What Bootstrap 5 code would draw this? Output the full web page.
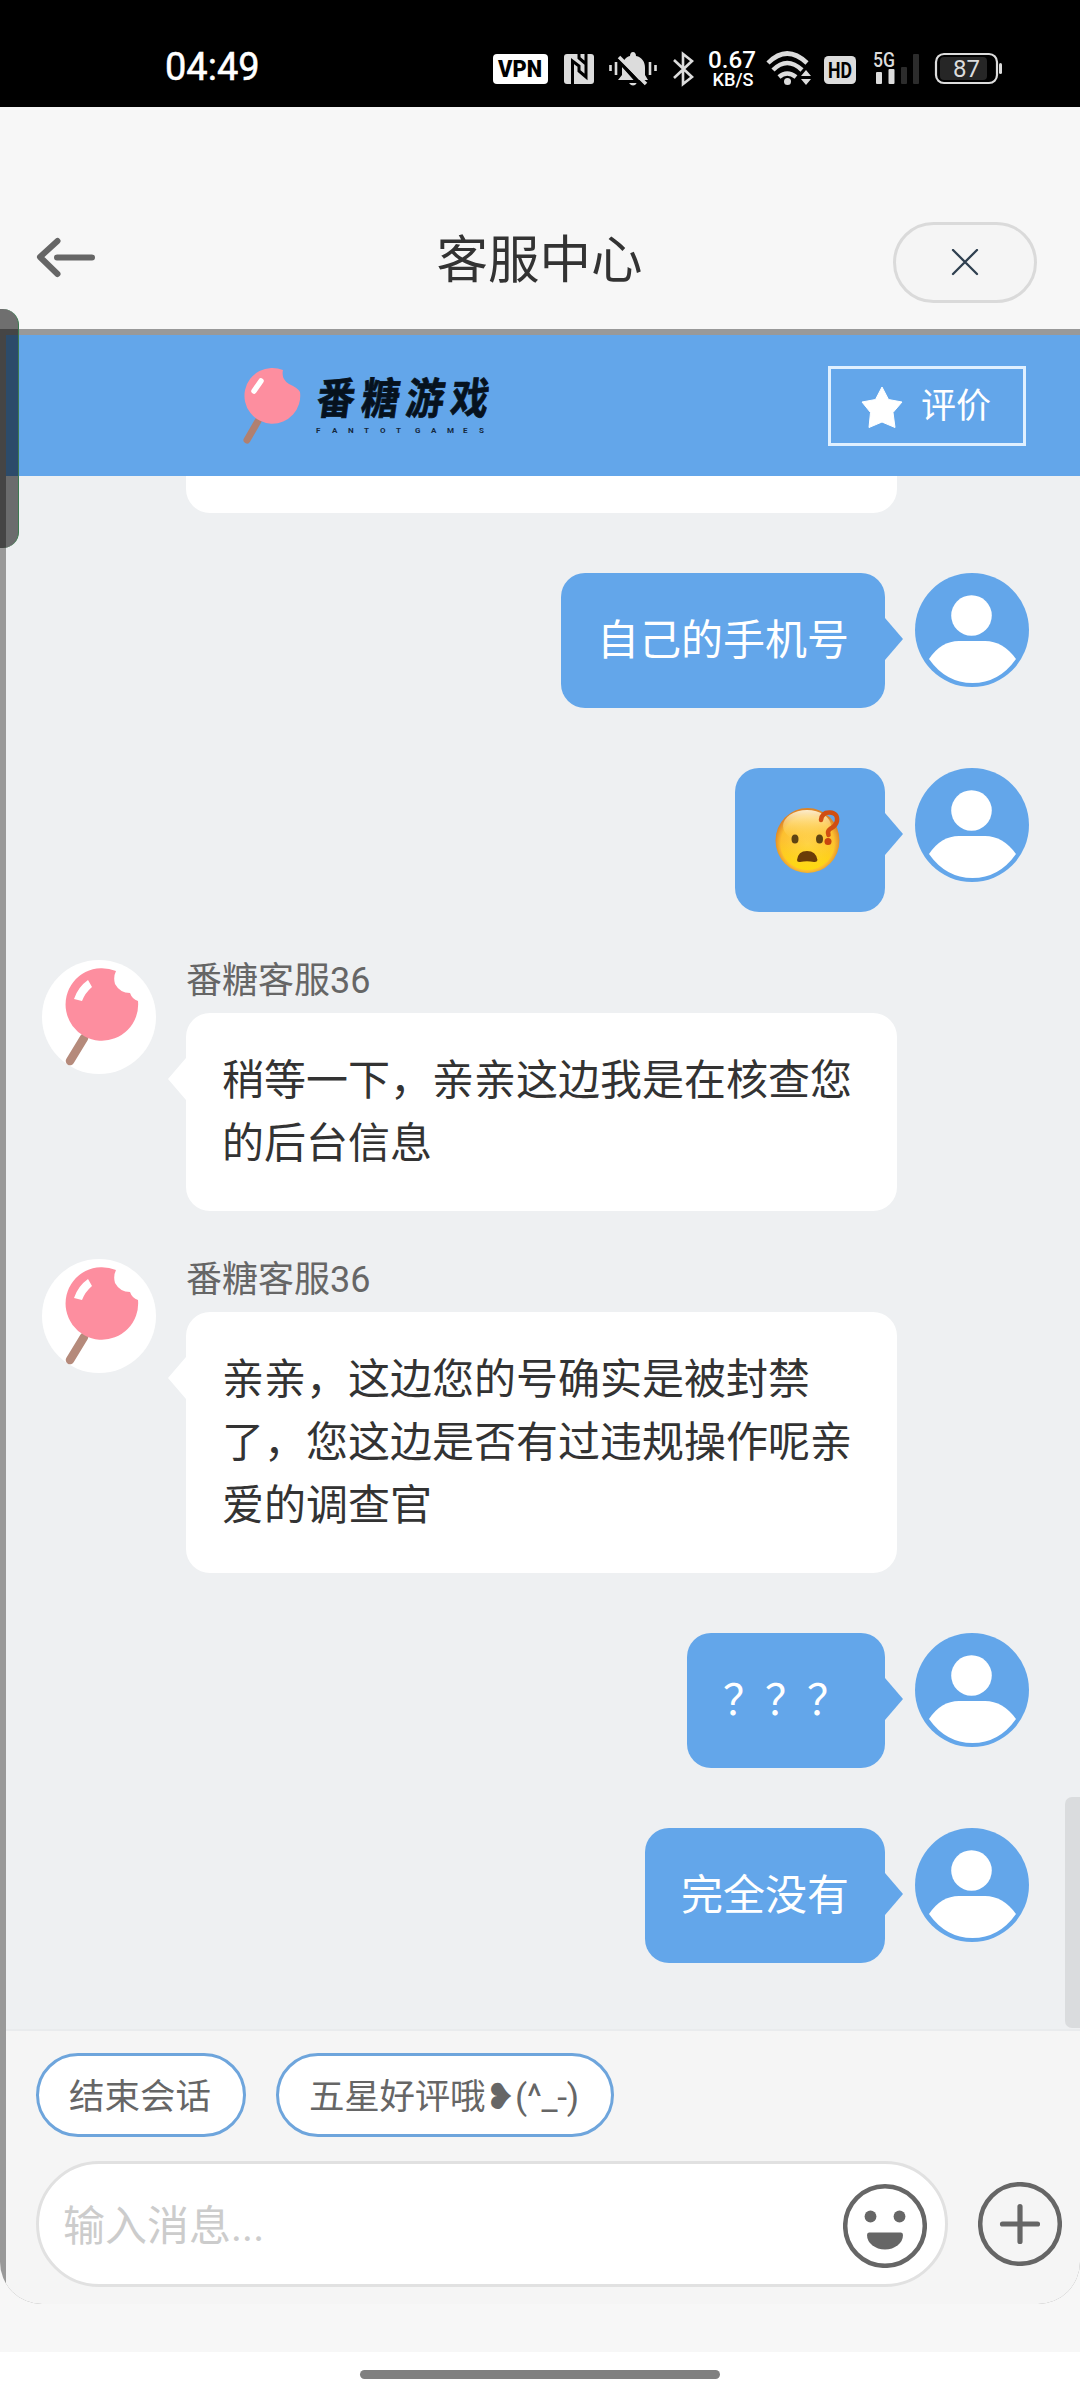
<!DOCTYPE html>
<html lang="zh-CN">
<head>
<meta charset="utf-8">
<meta name="viewport" content="width=device-width, initial-scale=1">
<title>客服中心</title>
<link href="https://cdn.jsdelivr.net/npm/bootstrap@5.3.0/dist/css/bootstrap.min.css" rel="stylesheet">
<style>
  :root { --brand: #63a6ea; --chat: #eef0f2; }
  body { width: 1080px; height: 2400px; overflow: hidden; background: #fff; color: #333;
    font-family: Roboto, "Noto Sans CJK SC", sans-serif; font-size: 42px; line-height: 63px; }
  svg { display: block; flex: none; }
  .statusbar { height: 107px; background: #000; color: #fff; padding: 0 0 17px 165px; }
  .clock { font-size: 38px; width: 328px; line-height: 90px; padding-top: 48px; -webkit-text-stroke: .5px #fff; }
  .titlebar { height: 222px; background: #f7f7f7; padding: 93px 43px 4px 36px; }
  .titlebar .side { width: 144px; padding-bottom: 11px; }
  .page-title { font-size: 51.5px; line-height: 76px; padding: 0 0 3px 6px; }
  .capsule { width: 144px; height: 81px; border: 3px solid #dadada; background: #f5f5f5; }
  .pane-wrap { background: #f7f7f7; height: 2023px; }
  .pane { height: 1975px; padding: 6px 0 0 6px; background: #999; border-radius: 0 0 42px 42px; overflow: hidden; }
  .brandbar { height: 141px; background: var(--brand); padding: 0 54px 0 234px; }
  .rate { width: 198px; height: 80px; border: 3px solid #e0f0ff; color: #fff; font-size: 35px; gap: 18px; padding: 2px 2px 0 0; }
  .chat { height: 1553px; background: var(--chat); padding: 0 51px 0 36px; }
  .bubble { position: relative; border-radius: 24px; padding: 36px; }
  .bubble-me { background: var(--brand); color: #fff; margin-right: 30px; }
  .bubble-agent { background: #fff; width: 711px; }
  .bubble-me::after, .bubble-agent.tail::before { content: ""; position: absolute; top: 45px; border: 21px solid transparent; }
  .bubble-me::after { left: 100%; border-left: 18px solid var(--brand); border-right: 0; }
  .bubble-agent.tail::before { right: 100%; border-right: 18px solid #fff; border-left: 0; }
  .cut { height: 37px; padding: 0; margin-left: 144px; border-radius: 0 0 24px 24px; }
  .row-me { margin-top: 60px; }
  .row-agent { margin-top: 48px; gap: 30px; }
  .agent-name { font-size: 36px; line-height: 39px; padding-top: 2px; margin-bottom: 12px; color: #666; }
  .face { width: 78px; height: 72px; padding: 2px 4px; }
  .composer { border-top: 2px solid #e9ebed; height: 275px; background: #f5f5f5; padding: 22px 18px 17px 30px; }
  .chips { gap: 30px; }
  .chip { height: 84px; border: 3px solid #6ea5dc; background: #fff; color: #666; font-size: 35.5px; padding: 5px 32px 0 30px; }
  .chip-praise { letter-spacing: -.25px; }
  .msgbox { width: 912px; height: 126px; border: 3px solid #e1e1e1; background: #fff; color: #ccc; padding: 0 18px 0 24px; margin-right: 30px; }
  .msgbox span { padding-top: 4px; }
  .homebar { width: 360px; height: 9px; background: #808080; margin-top: 18px; }
  .scroll-thumb { position: absolute; left: 1065px; top: 1797px; width: 15px; height: 231px; background: #dadcde; border-radius: 7px 0 0 7px; }
  .edge-tab { position: absolute; left: 0; top: 309px; width: 19px; height: 239px; background: rgba(0,0,0,.55); border-radius: 0 16px 16px 0; border-right: 1px solid #3c7a50; }
</style>
</head>
<body class="position-relative">
<svg width="0" height="0" class="position-absolute">
  <symbol id="user" viewBox="0 0 114 114">
    <circle cx="57" cy="57" r="57" fill="#63a6ea"/>
    <circle cx="56.500" cy="42.500" r="20.300" fill="#fff"/>
    <path d="M14 86Q26 68 44 68H70Q88 68 101 86Q84 110 57.500 110Q31 110 14 86Z" fill="#fff"/>
  </symbol>
  <symbol id="pop" viewBox="0 0 114 114">
    <circle cx="57" cy="57" r="57" fill="#fff"/>
    <path d="M42 78L28 101" stroke="#b58a7b" stroke-width="8.500" stroke-linecap="round"/>
    <path d="M74 11A36.300 36.300 0 1 0 96 41Q90 39 88 33Q78 33 73 24Q71 17 74 11Z" fill="#fd8e9f"/>
    <path d="M46 20L50 27Q43 33 40 41L32 39Q36 27 46 20Z" fill="#fff"/>
  </symbol>
</svg>

<header class="statusbar d-flex align-items-start">
  <div class="clock lh-1">04:49</div>
  <svg width="520" height="90" viewBox="493 0 520 90" fill="#dcdcdc" font-family="Roboto, sans-serif">
    <rect x="493" y="54" width="55" height="30" rx="4" fill="#fff"/>
    <text x="498" y="77" font-size="23" font-weight="900" fill="#000" textLength="44" lengthAdjust="spacingAndGlyphs">VPN</text>
    <rect x="564" y="54" width="30" height="30" rx="3"/>
    <path d="M572.500 84V61L579 66V71L586 77V54M579 66M579 54V58L586 64" fill="none" stroke="#000" stroke-width="3"/>
    <path d="M633 52c2 0 3 2 3 4c6 1 9 6 9 12v7l3 5H618l4-5v-7c0-6 3-11 8-12c0-2 1-4 3-4zM629 83h8q-4 5-8 0z"/>
    <path d="M616 57L645 90" stroke="#000" stroke-width="4"/>
    <path d="M619 57L646 84" stroke="#dcdcdc" stroke-width="3.500"/>
    <path d="M617 60L643 86" stroke="#000" stroke-width="2.500"/>
    <path d="M610.500 65v6M616 62v13M650 62v13M655.500 65v6" stroke="#dcdcdc" stroke-width="2.600"/>
    <path d="M674 60L692 77L683 84V54L692 61L674 78" fill="none" stroke="#dcdcdc" stroke-width="2.600"/>
    <text font-weight="500" fill="#fff"><tspan x="708" y="68" font-size="24.500" textLength="48" lengthAdjust="spacingAndGlyphs">0.67</tspan><tspan x="712.500" y="86" font-size="18.500" textLength="41" lengthAdjust="spacingAndGlyphs">KB/S</tspan></text>
    <g fill="none" stroke="#dcdcdc" stroke-width="4.500">
      <path d="M768 63Q787 44 807 63"/><path d="M773 70Q787 56 802 70"/><path d="M779 77Q787 70 796 77"/>
    </g>
    <circle cx="787.500" cy="81.500" r="3.500"/>
    <path d="M801 76h10l-5-6zM801 79h10l-5 6z"/>
    <rect x="824" y="56" width="32" height="28" rx="4.500"/>
    <text x="828" y="78" font-size="22" font-weight="700" fill="#000" textLength="24" lengthAdjust="spacingAndGlyphs">HD</text>
    <text x="873" y="67" font-size="20" font-weight="500" textLength="22" lengthAdjust="spacingAndGlyphs">5G</text>
    <rect x="876" y="72" width="6" height="12" rx="1"/><rect x="888.500" y="69" width="6" height="15" rx="1"/>
    <rect x="901" y="67" width="6" height="17" rx="1" fill="#2c2c2c"/><rect x="913" y="54" width="6" height="30" rx="1" fill="#2c2c2c"/>
    <rect x="936" y="54" width="61" height="29" rx="8" fill="none" stroke="#dcdcdc" stroke-width="2.200"/>
    <rect x="940" y="57" width="47" height="23" rx="4" fill="#262626"/>
    <rect x="999" y="63" width="3" height="11" rx="1.500"/>
    <text x="953" y="77" font-size="24" textLength="27" lengthAdjust="spacingAndGlyphs">87</text>
  </svg>
</header>

<nav class="titlebar d-flex align-items-center justify-content-between">
  <div class="side">
    <svg width="60" height="44" viewBox="36 235 60 44" fill="none" stroke="#666" stroke-width="6" stroke-linecap="round" stroke-linejoin="round"><path d="M57.500 241L40 257L57.500 274M57 257.500H92"/></svg>
  </div>
  <div class="page-title">客服中心</div>
  <div class="capsule rounded-pill d-flex align-items-center justify-content-center">
    <svg width="28" height="28" viewBox="0 0 28 28" stroke="#2f4050" stroke-width="2.300" stroke-linecap="round"><path d="M2 1L26 25M26 1L2 25"/></svg>
  </div>
</nav>

<div class="pane-wrap">
<main class="pane">
  <div class="brandbar d-flex align-items-center justify-content-between">
    <svg width="260" height="90" viewBox="240 360 260 90">
      <path d="M258 420L247 439" stroke="#b08070" stroke-width="7" stroke-linecap="round"/>
      <path d="M283 369A27.900 27.900 0 1 0 300 391Q298 387 289 383Q281 378 283 369Z" fill="#fd8e9f"/>
      <path d="M261 380L254 390" stroke="#fff" stroke-width="5.500" stroke-linecap="round"/>
      <text transform="translate(315 413) skewX(-8) scale(.88 1)" font-family="Noto Sans CJK SC, sans-serif" font-weight="700" font-size="43" letter-spacing="7.800" fill="#06121e" stroke="#06121e" stroke-width=".8">番糖游戏</text>
      <text y="432" font-family="Roboto, sans-serif" font-weight="700" font-size="8" fill="#15283c" x="316 332 348 364 380 396 414 415 431 447 463 479">FANTOT GAMES</text>
    </svg>
    <div class="rate d-flex align-items-center justify-content-center">
      <svg width="42" height="42" viewBox="0 0 42 42" fill="#fff" stroke="#fff" stroke-width="1" stroke-linejoin="round"><path d="M21 1L27.500 13.500L41 16L32 26.500L34 41.500L21 36L8 41.500L9.500 26.500L1 16L14.500 13.500Z"/></svg>
      <span>评价</span>
    </div>
  </div>

  <section class="chat">
    <div class="bubble bubble-agent cut"></div>

    <div class="row-me d-flex justify-content-end align-items-start">
      <div class="bubble bubble-me">自己的手机号</div>
      <svg width="114" height="114"><use href="#user"/></svg>
    </div>

    <div class="row-me d-flex justify-content-end align-items-start">
      <div class="bubble bubble-me"><div class="face">
        <svg width="66" height="68" viewBox="0 0 66 68">
          <defs>
            <radialGradient id="skin" cx=".5" cy=".55" r=".52"><stop offset="0" stop-color="#ffd24a"/><stop offset=".8" stop-color="#fdc02f"/><stop offset="1" stop-color="#dd8428"/></radialGradient>
            <linearGradient id="shine" x2="0" y2="1"><stop offset="0" stop-color="#fff3d6" stop-opacity=".95"/><stop offset="1" stop-color="#ffd24a" stop-opacity="0"/></linearGradient>
            <linearGradient id="chin" x2="0" y2="1"><stop offset=".5" stop-color="#ffe600" stop-opacity="0"/><stop offset="1" stop-color="#ffe600" stop-opacity=".7"/></linearGradient>
          </defs>
          <ellipse cx="32.500" cy="34.500" rx="32" ry="32.500" fill="url(#skin)"/>
          <ellipse cx="32.500" cy="34.500" rx="28" ry="29.500" fill="url(#chin)"/>
          <ellipse cx="32" cy="20" rx="24" ry="16" fill="url(#shine)"/>
          <ellipse cx="20" cy="33" rx="3.500" ry="4.500" fill="#5e4312"/><ellipse cx="44.500" cy="33" rx="3.500" ry="4.500" fill="#5e4312"/>
          <path d="M22 54Q23 45 32 45Q41 45 42.500 54Q42 56.500 39 56Q32 54.500 25 56Q22 56.500 22 54Z" fill="#6b3d08"/>
          <path d="M46 14Q47 6 55 6.500Q63 7 62 15Q61 20 55 23Q52 25 53.500 29" fill="none" stroke="#d04e12" stroke-width="4.500" stroke-linecap="round"/>
          <circle cx="53" cy="35.500" r="3.500" fill="#c8440e"/>
        </svg>
      </div></div>
      <svg width="114" height="114"><use href="#user"/></svg>
    </div>

    <div class="row-agent d-flex align-items-start">
      <svg width="114" height="114"><use href="#pop"/></svg>
      <div>
        <div class="agent-name">番糖客服36</div>
        <div class="bubble bubble-agent tail">稍等一下，亲亲这边我是在核查您的后台信息</div>
      </div>
    </div>

    <div class="row-agent d-flex align-items-start">
      <svg width="114" height="114"><use href="#pop"/></svg>
      <div>
        <div class="agent-name">番糖客服36</div>
        <div class="bubble bubble-agent tail">亲亲，这边您的号确实是被封禁了，您这边是否有过违规操作呢亲爱的调查官</div>
      </div>
    </div>

    <div class="row-me d-flex justify-content-end align-items-start">
      <div class="bubble bubble-me">？？？</div>
      <svg width="114" height="114"><use href="#user"/></svg>
    </div>

    <div class="row-me d-flex justify-content-end align-items-start">
      <div class="bubble bubble-me">完全没有</div>
      <svg width="114" height="114"><use href="#user"/></svg>
    </div>
  </section>

  <footer class="composer d-flex flex-column justify-content-between">
    <div class="chips d-flex">
      <div class="chip rounded-pill d-flex align-items-center">结束会话</div>
      <div class="chip chip-praise rounded-pill d-flex align-items-center">五星好评哦❥(^_-)</div>
    </div>
    <div class="d-flex align-items-center">
      <div class="msgbox rounded-pill d-flex align-items-center justify-content-between">
        <span>输入消息...</span>
        <svg width="84" height="88" viewBox="0 -2 84 88" fill="#666"><g transform="translate(0 2)"><circle cx="42" cy="42" r="39.800" fill="none" stroke="#666" stroke-width="4.500"/><circle cx="27.500" cy="32.500" r="5.900"/><circle cx="56.500" cy="32.500" r="5.900"/><path d="M26 48.500H58Q60 48.500 60 51A18 14.500 0 0 1 24 51Q24 48.500 26 48.500Z"/></g></svg>
      </div>
      <svg width="84" height="84" viewBox="0 0 84 84" fill="none" stroke="#666"><circle cx="42" cy="42" r="39.800" stroke-width="4.500"/><path d="M42 24.500V59.500M24.500 42H59.500" stroke-width="5.200" stroke-linecap="round"/></svg>
    </div>
  </footer>
</main>
</div>
<div class="homebar rounded-pill mx-auto"></div>
<div class="scroll-thumb"></div>
<div class="edge-tab"></div>
<script src="https://cdn.jsdelivr.net/npm/bootstrap@5.3.0/dist/js/bootstrap.bundle.min.js"></script>
</body>
</html>
